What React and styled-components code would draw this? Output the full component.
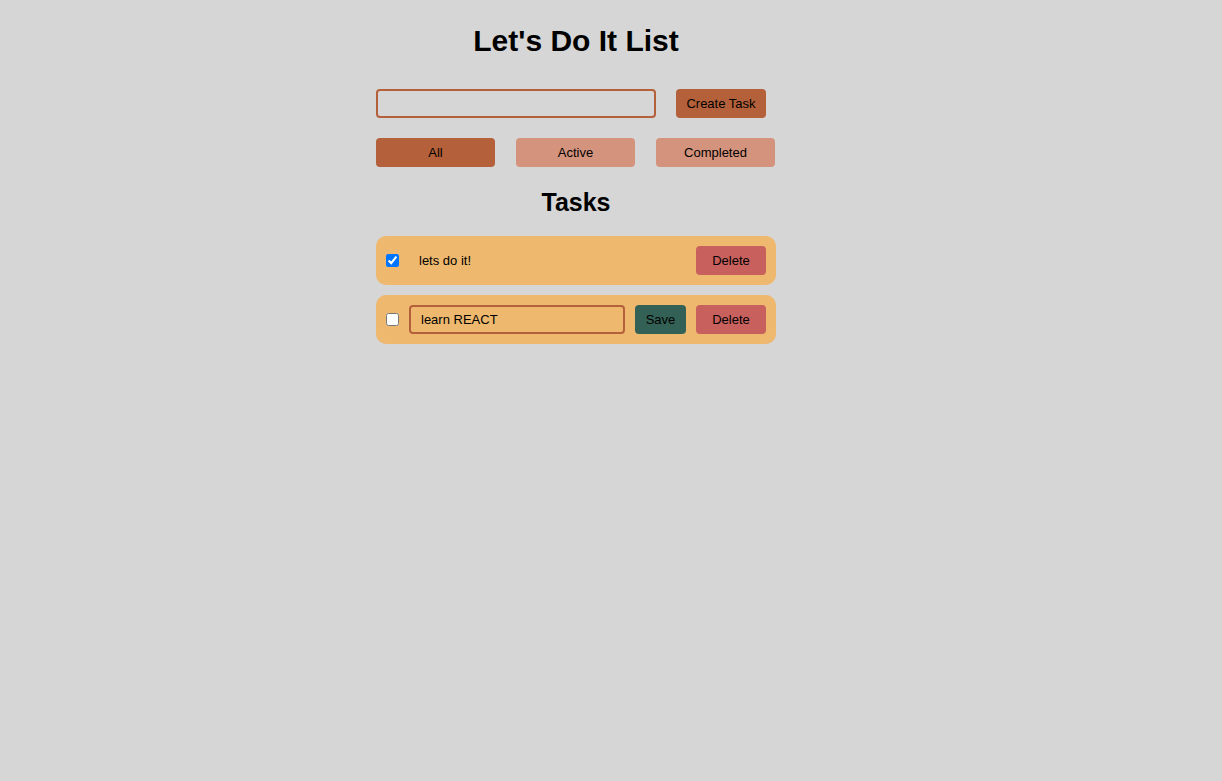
import React, { useState } from 'react';
import styled, { createGlobalStyle } from 'styled-components';

const GlobalStyle = createGlobalStyle`
    html, body {
        margin: 0;
        padding: 0;
        background-color: #d6d6d6;
        font-family: "Liberation Sans", Arial, sans-serif;
        min-height: 100%;
    }
`

function App() {
    const [tasks, setTasks] = useState([
        { id: 1, text: 'lets do it!', done: true, editing: false },
        { id: 2, text: 'learn REACT', done: false, editing: true },
    ]);
    const [filter, setFilter] = useState('All');

    const toggle = (id) =>
        setTasks(tasks.map(t => t.id === id ? { ...t, done: !t.done } : t));

    return (
        <Page>
            <GlobalStyle />
            <Container>
                <Title>Let's Do It List</Title>
                <Form onSubmit={e => e.preventDefault()}>
                    <TaskInput type="text" />
                    <Button color="#b4603a" width="90px">Create Task</Button>
                </Form>
                <Filters>
                    {['All', 'Active', 'Completed'].map(name => (
                        <FilterButton
                            key={name}
                            active={name === filter ? 1 : 0}
                            onClick={() => setFilter(name)}
                        >
                            {name}
                        </FilterButton>
                    ))}
                </Filters>
                <Heading>Tasks</Heading>
                <List>
                    {tasks.map(task => (
                        <Item key={task.id}>
                            <Check type="checkbox" checked={task.done} onChange={() => toggle(task.id)} />
                            {task.editing
                                ? <EditInput type="text" defaultValue={task.text} />
                                : <Label>{task.text}</Label>}
                            {task.editing && <Button color="#336155" width="51px">Save</Button>}
                            <Button color="#c8605d" width="70px">Delete</Button>
                        </Item>
                    ))}
                </List>
            </Container>
        </Page>
    );
}

export default App;

/* the app sits a bit left of the window centre */
const Page = styled.div`
    display: flex;
    justify-content: center;
    padding-right: 70px;
`
const Container = styled.div`
    width: 400px;
    padding-top: 25px;
`
const Title = styled.h1`
    margin: 0 0 32px;
    font-size: 30px;
    font-weight: 700;
    text-align: center;
    line-height: 32px;
`
const Form = styled.form`
    display: flex;
    gap: 20px;
    margin-bottom: 20px;
`
const TaskInput = styled.input`
    box-sizing: border-box;
    width: 280px;
    height: 29px;
    border: 2px solid #b4603a;
    border-radius: 4px;
    background: transparent;
    outline: none;
    font-family: inherit;
    font-size: 13px;
    padding: 0 10px;
`
const Button = styled.button`
    box-sizing: border-box;
    width: ${props => props.width || 'auto'};
    height: 29px;
    border: none;
    border-radius: 4px;
    background-color: ${props => props.color};
    color: #000;
    font-family: inherit;
    font-size: 13px;
    padding: 0;
    cursor: pointer;
    flex-shrink: 0;
`
const Filters = styled.div`
    display: flex;
    gap: 21px;
`
const FilterButton = styled.button`
    box-sizing: border-box;
    width: 119px;
    height: 29px;
    border: none;
    border-radius: 4px;
    background-color: ${props => props.active ? '#b4603a' : '#d4937c'};
    color: #000;
    font-family: inherit;
    font-size: 13px;
    cursor: pointer;
`
const Heading = styled.h2`
    margin: 21px 0 20px;
    font-size: 25px;
    line-height: 28px;
    font-weight: 700;
    text-align: center;
`
const List = styled.ul`
    list-style: none;
    margin: 0;
    padding: 0;
    display: flex;
    flex-direction: column;
    gap: 10px;
`
const Item = styled.li`
    display: flex;
    align-items: center;
    gap: 10px;
    padding: 10px;
    border-radius: 10px;
    background-color: #eeb86f;
`
const Check = styled.input`
    width: 13px;
    height: 13px;
    margin: 0;
    flex-shrink: 0;
`
const Label = styled.span`
    flex: 1;
    padding: 0 10px;
    font-size: 13px;
`
const EditInput = styled.input`
    box-sizing: border-box;
    flex: 1;
    min-width: 0;
    height: 29px;
    border: 2px solid #b4603a;
    border-radius: 4px;
    background: transparent;
    outline: none;
    font-family: inherit;
    font-size: 13px;
    padding: 0 10px;
`
